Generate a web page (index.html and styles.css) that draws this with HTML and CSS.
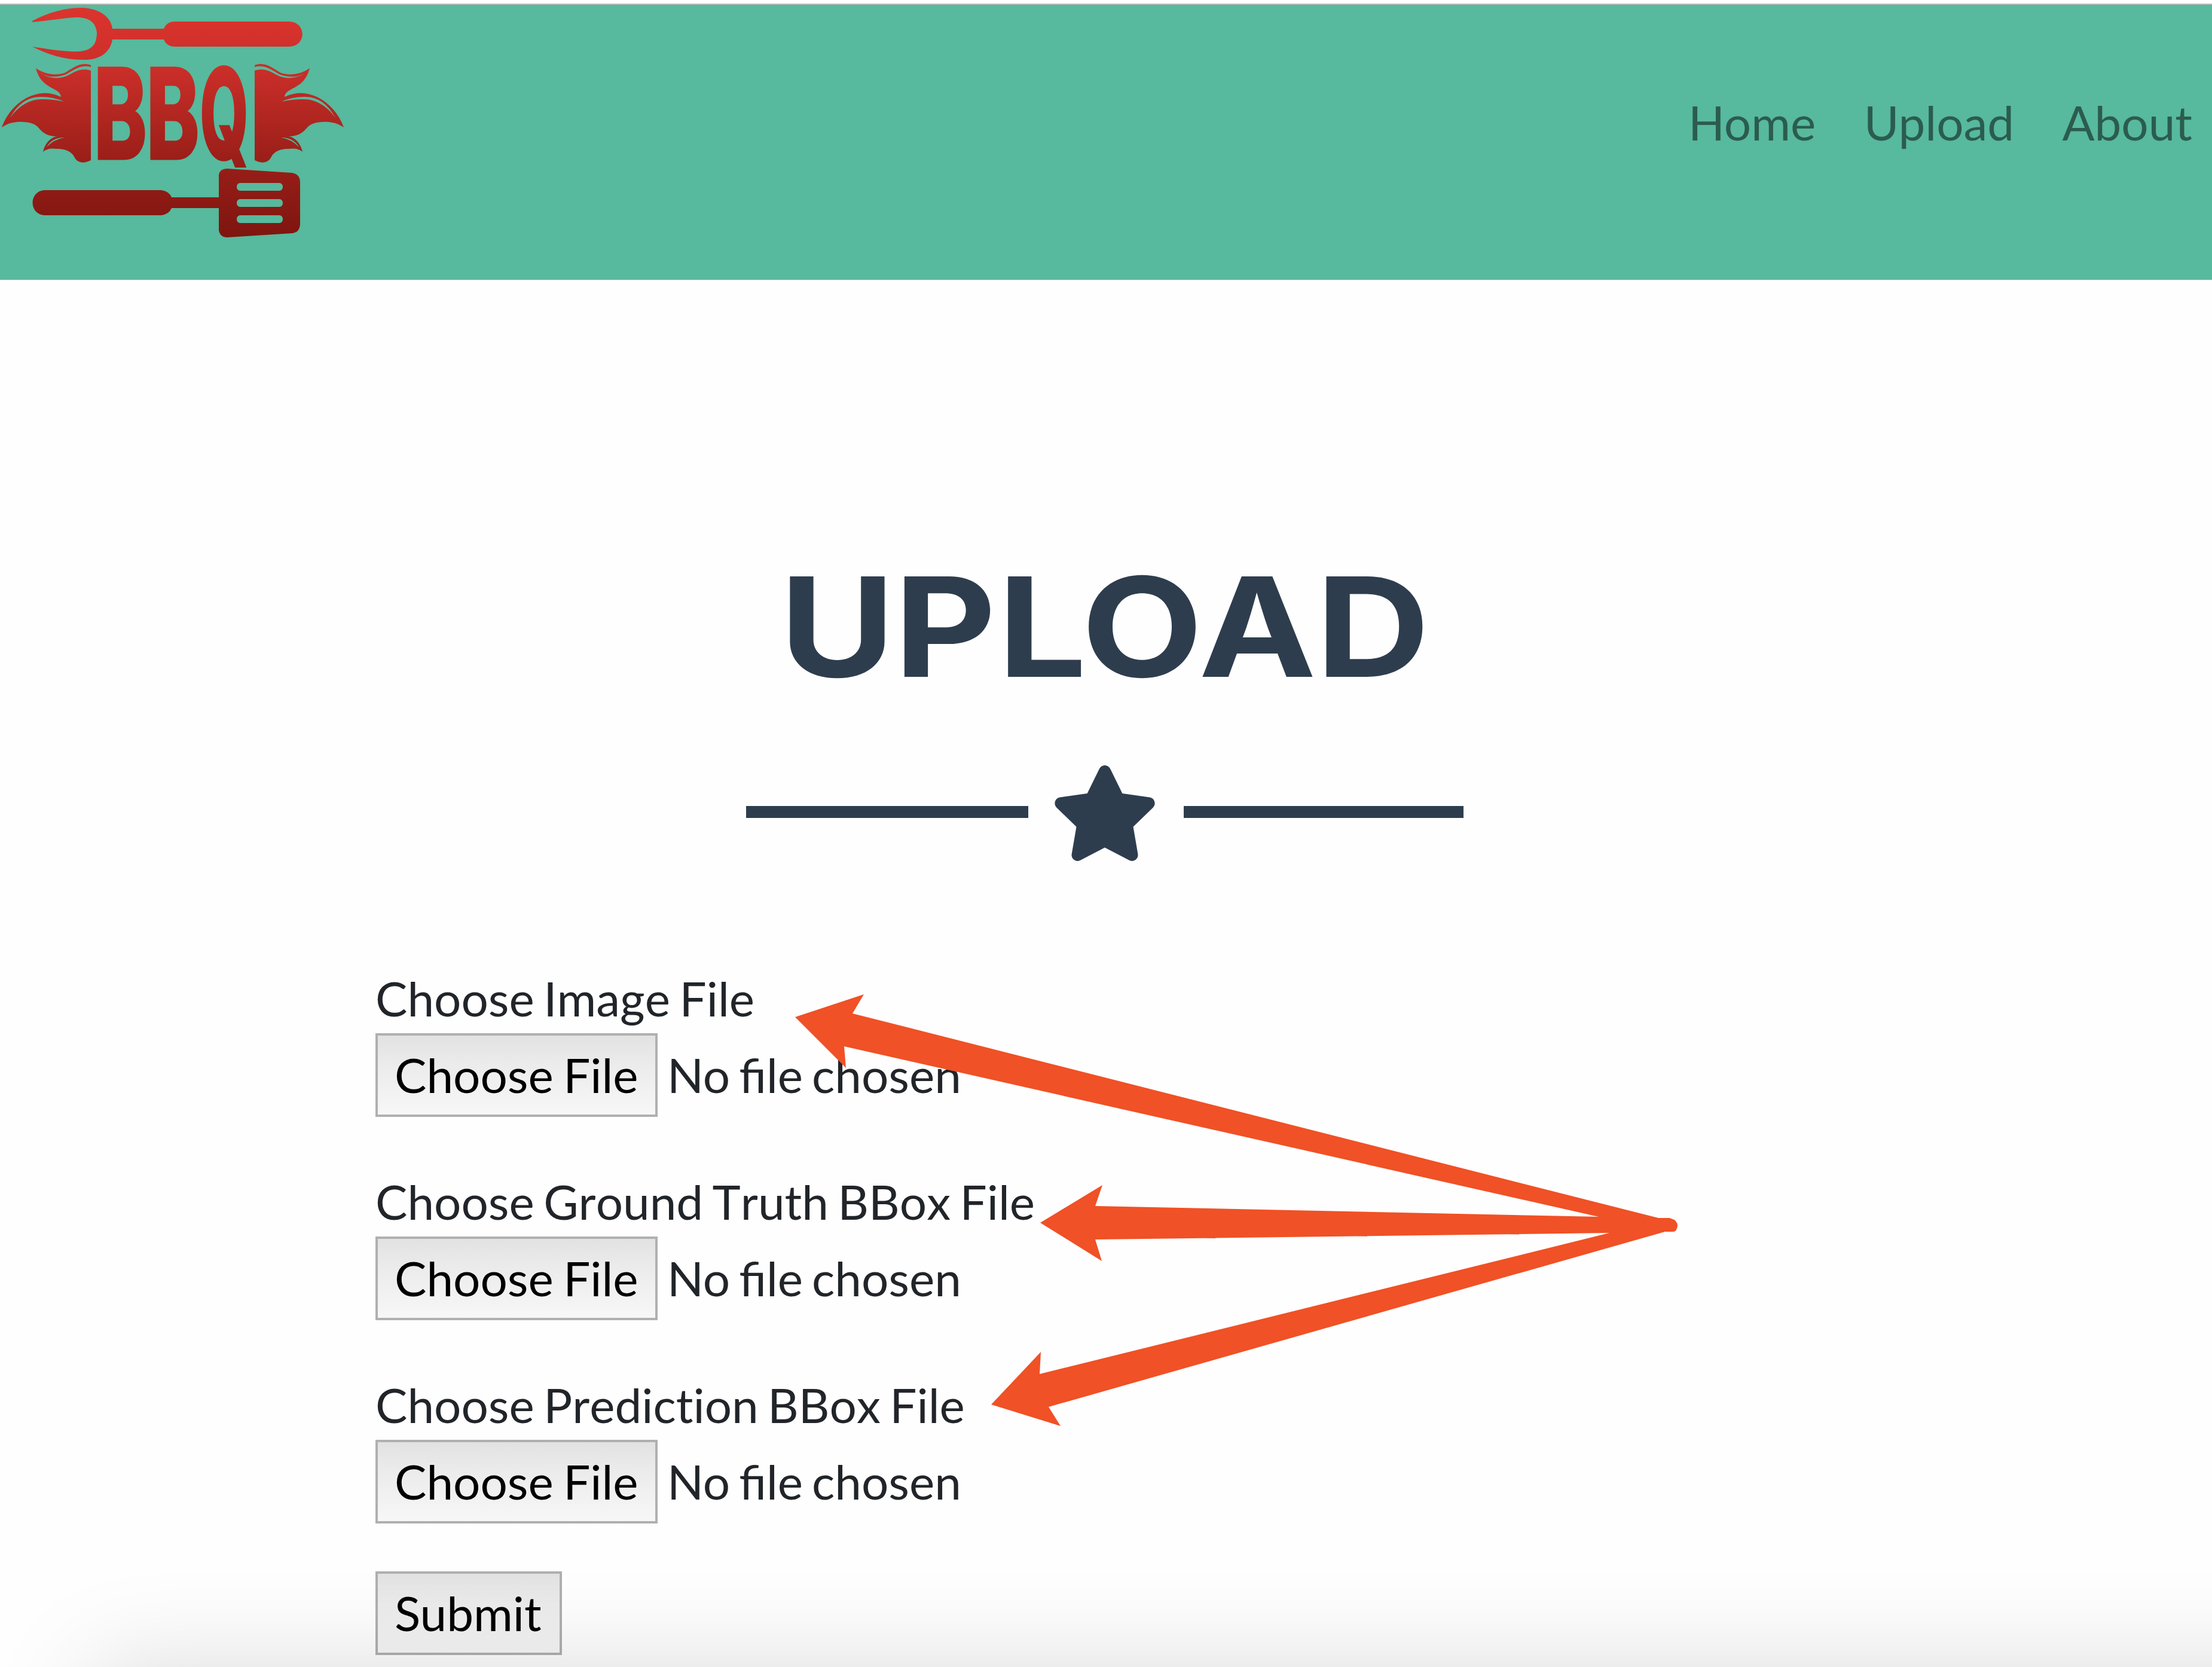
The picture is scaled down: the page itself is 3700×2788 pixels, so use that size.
FILE: index.html
```html
<!DOCTYPE html>
<html lang="en">
<head>
<meta charset="utf-8">
<title>BBQ - Upload</title>
<link rel="stylesheet" href="styles.css">
</head>
<body>
<header class="navbar">
  <a class="brand">
    <svg class="logo" viewBox="0 8 600 440" role="img" aria-label="BBQ">
      <defs>
        <linearGradient id="ember" gradientUnits="userSpaceOnUse" x1="0" y1="12" x2="0" y2="397">
          <stop offset="0" stop-color="#dc342e"/>
          <stop offset=".25" stop-color="#cd2f2a"/>
          <stop offset=".65" stop-color="#9c1f19"/>
          <stop offset="1" stop-color="#7e150f"/>
        </linearGradient>
        <g id="flame">
          <path d="M152 118C132 112 121 124 109 128C95 133 77 130 67 121C79 131 97 129 109 125C122 119 133 107 152 112V109C134 102 121 115 108 122C93 127 74 124 60 114C64 130 72 138 80 143C87 149 101 151 102 162C89 156 78 155 70 156C38 159 13 185 3 213C14 205 28 203 40 204Q55 205 62 211C68 217 74 228 95 228C84 230 75 240 72 254C79 248 86 248 97 249C109 249 119 253 124 262C129 273 140 274 152 268Z"/>
          <path class="glint" d="M17 197C30 173 48 161 70 162Q90 162 107 170Q90 166 72 166C50 165 30 178 17 197Z M78 246Q87 230 108 230Q90 233 78 246Z"/>
        </g>
      </defs>
      <g fill="url(#ember)">
        <path d="M54 35C82 20 110 13 137 13C166 14 186 28 188 48H274C277 40 284 36 292 36H484C513 37 513 77 484 78H292C284 78 277 74 274 66H188C184 90 164 101 138 100C108 100 80 91 54 78C80 82 108 87 133 86C154 84 162 74 162 54C160 38 150 29 128 29C104 30 80 35 54 37Z"/>
        <use href="#flame"/>
        <use href="#flame" transform="translate(578 0) scale(-1 1)"/>
        <text class="logo-text" transform="scale(.65 1)" x="242 377" y="264">BB</text>
        <text class="logo-text" transform="scale(.5 1)" x="670" y="264">Q</text>
        <path fill-rule="evenodd" d="M74 318H270Q283 320 287 330H366V292Q368 282 380 282L488 289Q502 291 502 305V376Q501 388 490 390L380 397Q368 397 366 385V348H287Q283 358 270 360H74C48 358 48 320 74 318Z M402 306C394 306 394 319 402 319H467C475 319 475 306 467 306Z M402 333C394 333 394 346 402 346H467C475 346 475 333 467 333Z M402 360C394 360 394 373 402 373H467C475 373 475 360 467 360Z"/>
      </g>
    </svg>
  </a>
  <nav class="links">
    <a>Home</a>
    <a>Upload</a>
    <a>About</a>
  </nav>
</header>
<main class="page">
  <h2 class="title">
    <svg class="title-art" viewBox="0 0 2444 288"><text transform="scale(1.14 1)" x="593 761 913 1036 1208 1380" y="224">UPLOAD</text></svg>
  </h2>
  <div class="divider">
    <span class="rule rule-left"></span>
    <svg class="star" viewBox="0 0 576 512"><path d="M259.3 17.8L194 150.2 47.9 171.5c-26.2 3.8-36.7 36.1-17.7 54.6l105.7 103-25 145.5c-4.5 26.3 23.2 46 46.4 33.7L288 439.6l130.7 68.7c23.2 12.2 50.9-7.4 46.4-33.7l-25-145.5 105.7-103c19-18.5 8.5-50.8-17.7-54.6L382 150.2 316.7 17.8c-11.7-23.6-45.6-23.9-57.4 0z"/></svg>
    <span class="rule"></span>
  </div>
  <form class="form">
    <div class="field">
      <label>Choose Image File</label>
      <div class="picker"><button type="button" class="btn">Choose File</button><span class="status">No file chosen</span></div>
    </div>
    <div class="field">
      <label>Choose Ground Truth BBox File</label>
      <div class="picker"><button type="button" class="btn">Choose File</button><span class="status">No file chosen</span></div>
    </div>
    <div class="field">
      <label>Choose Prediction BBox File</label>
      <div class="picker"><button type="button" class="btn">Choose File</button><span class="status">No file chosen</span></div>
    </div>
    <button type="button" class="btn btn-submit">Submit</button>
  </form>
</main>
<svg class="arrows" viewBox="0 0 3700 2788">
  <path d="M1330 1701L1445 1663L1426 1695L2774 2037H2792Q2806 2040 2806 2050Q2805 2060 2798 2060H2785L1754 2353L1774 2385L1658 2349L1741 2261L1739 2298L2692 2062L1832 2073L1843 2109L1740 2045L1844 1982L1832 2017L2674 2035L1412 1750L1415 1786Z"/>
</svg>
<div class="dock"></div>
</body>
</html>
```

FILE: styles.css
```css
* { box-sizing: border-box; }
body {
  margin: 0;
  height: 2788px;
  position: relative;
  overflow: hidden;
  background: #fefefe;
  color: #212529;
  font: 400 80px/120px Lato, sans-serif;
}
.navbar {
  display: flex;
  justify-content: space-between;
  margin-top: 6px;
  height: 462px;
  border-top: 2px solid #b5bbb8;
  background: #57b99d;
}
.logo { display: block; width: 600px; height: 440px; }
.logo-text { font: 700 205px Inter, sans-serif; stroke: url(#ember); stroke-width: 6px; vector-effect: non-scaling-stroke; }
.glint { fill: #57b99d; }
.links { display: flex; gap: 80.5px; padding: 136px 33px 0 0; color: rgba(0, 0, 0, .5); }
.page { height: 2320px; padding: 440px 628px 0; }
.title { margin: 0; height: 288px; }
.title-art {
  display: block;
  width: 2444px;
  height: 288px;
  fill: #2e3d4e;
  font: 700 231px Inter, sans-serif;
}
.divider { display: flex; align-items: center; margin-top: 84px; padding-left: 620px; height: 160px; }
.rule { width: 468px; height: 20px; margin-bottom: 4px; background: #2e3d4e; }
.rule-left { width: 472px; }
.star { width: 180px; height: 160px; margin: 0 42px 0 38px; fill: #2e3d4e; }
.form { margin-top: 168px; }
.field { height: 340px; }
.field label {
  display: block;
  height: 120px;
  padding-top: 1px;
  word-spacing: -5px;
  font-kerning: none;
  font-variant-ligatures: none;
}
.picker { display: flex; align-items: center; gap: 16px; }
.status { padding-bottom: 3px; word-spacing: -5.5px; }
.btn {
  display: block;
  width: 472px;
  height: 140px;
  padding: 0 0 3px 28px;
  border: 4px solid #b0b0b0;
  border-radius: 0;
  background: linear-gradient(#e2e2e2, #ebebeb 35%, #f7f7f7);
  color: #000;
  font: inherit;
  text-align: left;
  word-spacing: -4px;
}
.btn-submit { width: 312px; }
.arrows { position: absolute; left: 0; top: 0; width: 3700px; height: 2788px; fill: #f05126; }
.dock {
  position: absolute;
  left: 0;
  right: 0;
  bottom: 0;
  height: 300px;
  overflow: hidden;
}
.dock::after {
  content: "";
  position: absolute;
  left: 155px;
  right: -400px;
  top: 308px;
  height: 600px;
  box-shadow: 0 0 165px rgba(0, 0, 0, .15);
}
```
